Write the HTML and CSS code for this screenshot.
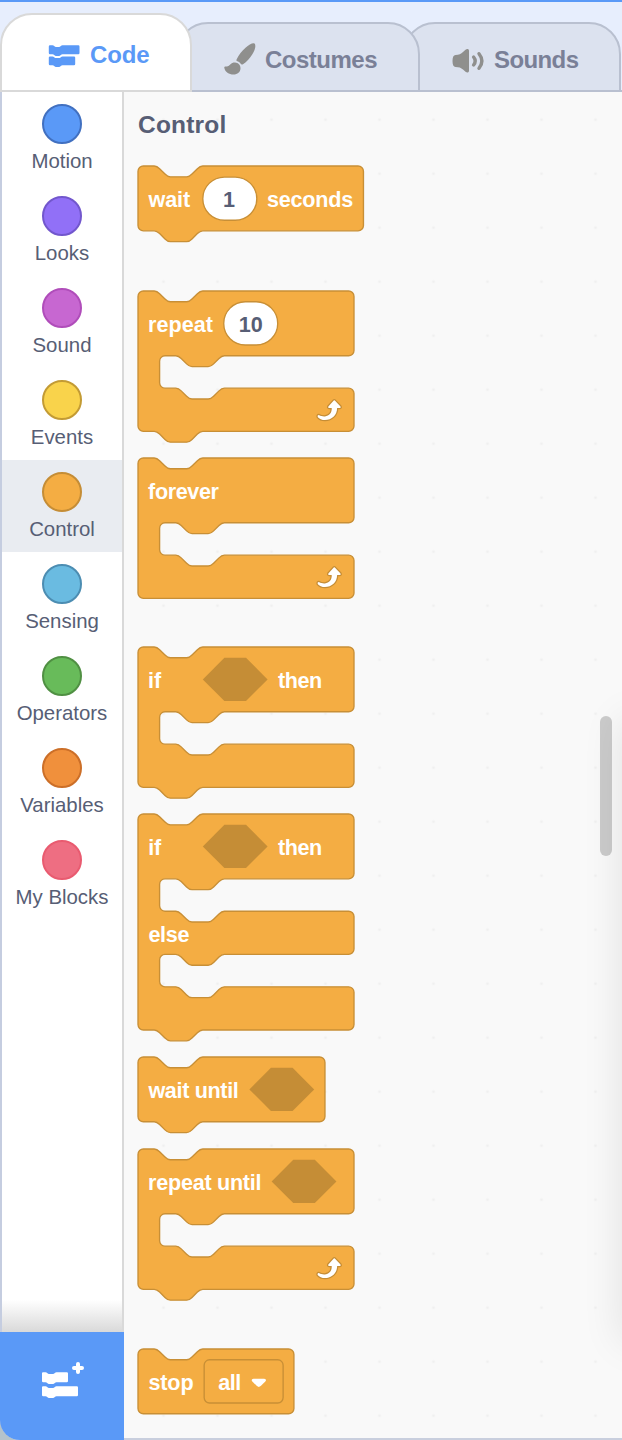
FILE: index.html
```
<!DOCTYPE html>
<html lang="en">
<head>
<meta charset="utf-8">
<title>Block editor</title>
<link rel="stylesheet" href="styles.css">
</head>
<body>
<svg class="defs" width="0" height="0" aria-hidden="true">
  <defs>
    <path id="c-block" d="M0 4A4 4 0 0 1 4 0H12c2 0 3 1 4 2l4 4c1 1 2 2 4 2h12c2 0 3-1 4-2l4-4c1-1 2-2 4-2H156a4 4 0 0 1 4 4V44a4 4 0 0 1-4 4H64c-2 0-3 1-4 2l-4 4c-1 1-2 2-4 2h-12c-2 0-3-1-4-2l-4-4c-1-1-2-2-4-2h-8a4 4 0 0 0-4 4v16a4 4 0 0 0 4 4h8c2 0 3 1 4 2l4 4c1 1 2 2 4 2h12c2 0 3-1 4-2l4-4c1-1 2-2 4-2H156a4 4 0 0 1 4 4v24a4 4 0 0 1-4 4H48c-2 0-3 1-4 2l-4 4c-1 1-2 2-4 2h-12c-2 0-3-1-4-2l-4-4c-1-1-2-2-4-2H4a4 4 0 0 1-4-4z"/>
    <path id="hexagon" d="M16 0H32L48 16L32 32H16L0 16z"/>
    <path id="loop-arrow" d="M17.800 5.100L22 9.500Q22.500 10.600 21.500 10.700H19.500C19.500 16 15.500 19.600 10.500 19.600C8.300 19.600 6.300 18.800 5.100 17.300Q4.700 16 6 15.900C7.500 16.800 9 17 10.500 16.900C13.700 16.500 15.700 14.300 15.500 10.700H13.600Q12.500 10.600 13 9.500L17 5.100Q17.400 4.800 17.800 5.100Z"/>
  </defs>
</svg>

<div class="editor">
  <header class="tabs">
    <div class="tab tab-code">
      <svg class="tab-icon" width="32" height="24" viewBox="0 0 32 24"><path d="M2 2.300H4.500Q5.500 2.300 6.200 3Q7 4 8 4H11Q12 4 12.800 3Q13.500 2.300 14.500 2.300H30.300Q31.500 2.300 31.500 3.500V10Q31.500 11.200 30.300 11.200H14.500Q13.500 11.200 12.800 12Q12 13 11 13H8Q7 13 6.200 12Q5.500 11.200 4.500 11.200H2Q.8 11.200 .8 10V3.500Q.8 2.300 2 2.300ZM2 13.400H4.500Q5.500 13.400 6.200 14.200Q7 15.100 8 15.100H11Q12 15.100 12.800 14.200Q13.500 13.400 14.500 13.400H26Q27.200 13.400 27.200 14.600V21Q27.200 22.200 26 22.200H14.500Q13.500 22.200 12.800 23Q12 24 11 24H8Q7 24 6.200 23Q5.500 22.200 4.500 22.200H2Q.8 22.200 .8 21V14.600Q.8 13.400 2 13.400Z"/></svg>
      <span>Code</span>
    </div>
    <div class="tab tab-costumes">
      <svg class="tab-icon" width="32" height="32" viewBox="0 0 32 32"><path d="M30.500.5C32.300 2 31 7 28.500 11C26 15 22.800 18.700 19 21.300C17.900 22 17 21.500 16.300 20.300C15.600 19.200 14.700 18.500 13.500 18.200C12.300 17.900 12.200 17.200 12.700 16.200C14.600 12.200 17.500 8.500 21.500 4.800C25 1.700 28.900-.6 30.500.5ZM11 19.600C14.300 19.700 16.500 22 16.500 25.200C16.500 29 13.500 31.500 9.500 31.500C5 31.500 1 29 .3 24.700C.1 23.500 1.200 23.500 2.500 23.600C4.500 23.700 5.300 22.500 6.500 21.300C7.700 20.100 9.300 19.500 11 19.600Z"/></svg>
      <span>Costumes</span>
    </div>
    <div class="tab tab-sounds">
      <svg class="tab-icon" width="34" height="26" viewBox="0 0 34 26"><path d="M3.500 7C7 7 9 6 11 4L13.500 1.800C15 .5 17 .8 17 2.800V22.800C17 24.800 15 25.100 13.500 23.800L11 21.500C9 19.600 7 18.900 3.500 18.900C1.500 18.900.5 17 .5 13C.5 9 1.500 7 3.500 7Z"/><path class="wave" d="M21.600 9Q24.800 13 21.600 17M27 5.700Q32.800 13 27 20.300"/></svg>
      <span>Sounds</span>
    </div>
  </header>

  <main class="workspace">
    <nav class="categories">
      <div class="category"><i class="dot motion"></i><span>Motion</span></div>
      <div class="category"><i class="dot looks"></i><span>Looks</span></div>
      <div class="category"><i class="dot sound"></i><span>Sound</span></div>
      <div class="category"><i class="dot events"></i><span>Events</span></div>
      <div class="category selected"><i class="dot control"></i><span>Control</span></div>
      <div class="category"><i class="dot sensing"></i><span>Sensing</span></div>
      <div class="category"><i class="dot operators"></i><span>Operators</span></div>
      <div class="category"><i class="dot variables"></i><span>Variables</span></div>
      <div class="category"><i class="dot myblocks"></i><span>My Blocks</span></div>
      <div class="fade"></div>
      <div class="extensions">
        <svg width="44" height="38" viewBox="0 0 44 38"><path d="M2 10.300H4.500Q5.500 10.300 6.200 11Q7 12 8 12H12Q13 12 13.800 11Q14.500 10.300 15.500 10.300H25.800Q27 10.300 27 11.500V19Q27 20.200 25.800 20.200H15.500Q14.500 20.200 13.800 21Q13 22 12 22H8Q7 22 6.200 21Q5.500 20.200 4.500 20.200H2.200Q1 20.200 1 19V11.500Q1 10.300 2 10.300ZM2 24.300H4.500Q5.500 24.300 6.200 25Q7 26 8 26H12Q13 26 13.800 25Q14.500 24.300 15.500 24.300H35.800Q37 24.300 37 25.500V33Q37 34.200 35.800 34.200H15.500Q14.500 34.200 13.800 35Q13 36 12 36H8Q7 36 6.200 35Q5.500 34.200 4.500 34.200H2.200Q1 34.200 1 33V25.500Q1 24.300 2 24.300Z"/><path class="plus" d="M37 2V10M33 6H41"/></svg>
      </div>
    </nav>

    <section class="palette">
      <h2>Control</h2>
      <svg class="block wait" width="226" height="65" viewBox="0 0 167.407 48.148">
        <path class="shape" d="M0 4A4 4 0 0 1 4 0H12c2 0 3 1 4 2l4 4c1 1 2 2 4 2h12c2 0 3-1 4-2l4-4c1-1 2-2 4-2H163a4 4 0 0 1 4 4V44a4 4 0 0 1-4 4H48c-2 0-3 1-4 2l-4 4c-1 1-2 2-4 2h-12c-2 0-3-1-4-2l-4-4c-1-1-2-2-4-2H4a4 4 0 0 1-4-4z"/>
        <text x="7.700" y="30" textLength="31">wait</text>
        <rect class="field" x="48" y="8.200" width="40" height="32" rx="16"/>
        <text class="value" x="67.500" y="30">1</text>
        <text x="95.500" y="30" textLength="64">seconds</text>
      </svg>
      <svg class="block repeat" width="216" height="140.400" viewBox="0 0 160 104">
        <use class="shape" href="#c-block"/>
        <text x="7.500" y="30.300" textLength="48">repeat</text>
        <rect class="field" x="63.500" y="8" width="40" height="32" rx="16"/>
        <text class="value" x="83.500" y="30.300">10</text>
        <use class="loop" href="#loop-arrow" x="128" y="76"/>
      </svg>
      <svg class="block forever" width="216" height="140.400" viewBox="0 0 160 104">
        <path class="shape" d="M0 4A4 4 0 0 1 4 0H12c2 0 3 1 4 2l4 4c1 1 2 2 4 2h12c2 0 3-1 4-2l4-4c1-1 2-2 4-2H156a4 4 0 0 1 4 4V44a4 4 0 0 1-4 4H64c-2 0-3 1-4 2l-4 4c-1 1-2 2-4 2h-12c-2 0-3-1-4-2l-4-4c-1-1-2-2-4-2h-8a4 4 0 0 0-4 4v16a4 4 0 0 0 4 4h8c2 0 3 1 4 2l4 4c1 1 2 2 4 2h12c2 0 3-1 4-2l4-4c1-1 2-2 4-2H156a4 4 0 0 1 4 4v24a4 4 0 0 1-4 4H4a4 4 0 0 1-4-4z"/>
        <text x="7.500" y="30.300" textLength="52.500">forever</text>
        <use class="loop" href="#loop-arrow" x="128" y="76"/>
      </svg>
      <svg class="block if-then" width="216" height="140.400" viewBox="0 0 160 104">
        <use class="shape" href="#c-block"/>
        <text x="7.500" y="30.300">if</text>
        <use class="slot" href="#hexagon" x="48" y="8"/>
        <text x="103.700" y="30.300" textLength="32.700">then</text>
      </svg>
      <svg class="block if-else" width="216" height="216" viewBox="0 0 160 160">
        <path class="shape" d="M0 4A4 4 0 0 1 4 0H12c2 0 3 1 4 2l4 4c1 1 2 2 4 2h12c2 0 3-1 4-2l4-4c1-1 2-2 4-2H156a4 4 0 0 1 4 4V44a4 4 0 0 1-4 4H64c-2 0-3 1-4 2l-4 4c-1 1-2 2-4 2h-12c-2 0-3-1-4-2l-4-4c-1-1-2-2-4-2h-8a4 4 0 0 0-4 4v16a4 4 0 0 0 4 4h8c2 0 3 1 4 2l4 4c1 1 2 2 4 2h12c2 0 3-1 4-2l4-4c1-1 2-2 4-2H156a4 4 0 0 1 4 4v24a4 4 0 0 1-4 4H64c-2 0-3 1-4 2l-4 4c-1 1-2 2-4 2h-12c-2 0-3-1-4-2l-4-4c-1-1-2-2-4-2h-8a4 4 0 0 0-4 4v16a4 4 0 0 0 4 4h8c2 0 3 1 4 2l4 4c1 1 2 2 4 2h12c2 0 3-1 4-2l4-4c1-1 2-2 4-2H156a4 4 0 0 1 4 4v24a4 4 0 0 1-4 4H48c-2 0-3 1-4 2l-4 4c-1 1-2 2-4 2h-12c-2 0-3-1-4-2l-4-4c-1-1-2-2-4-2H4a4 4 0 0 1-4-4z"/>
        <text x="7.500" y="30">if</text>
        <use class="slot" href="#hexagon" x="48" y="8"/>
        <text x="103.700" y="30" textLength="32.700">then</text>
        <text x="7.700" y="94.500" textLength="30.500">else</text>
      </svg>
      <svg class="block wait-until" width="187.650" height="64.800" viewBox="0 0 139 48">
        <path class="shape" d="M0 4A4 4 0 0 1 4 0H12c2 0 3 1 4 2l4 4c1 1 2 2 4 2h12c2 0 3-1 4-2l4-4c1-1 2-2 4-2H134.500a4 4 0 0 1 4 4V44a4 4 0 0 1-4 4H48c-2 0-3 1-4 2l-4 4c-1 1-2 2-4 2h-12c-2 0-3-1-4-2l-4-4c-1-1-2-2-4-2H4a4 4 0 0 1-4-4z"/>
        <text x="7.700" y="30.300" textLength="67">wait until</text>
        <use class="slot" href="#hexagon" x="82.500" y="8"/>
      </svg>
      <svg class="block repeat-until" width="216" height="140.400" viewBox="0 0 160 104">
        <use class="shape" href="#c-block"/>
        <text x="7.500" y="30.300" textLength="84">repeat until</text>
        <use class="slot" href="#hexagon" x="99" y="8"/>
        <use class="loop" href="#loop-arrow" x="128" y="76"/>
      </svg>
      <svg class="block stop" width="156.600" height="64.800" viewBox="0 0 116 48">
        <path class="shape" d="M0 4A4 4 0 0 1 4 0H12c2 0 3 1 4 2l4 4c1 1 2 2 4 2h12c2 0 3-1 4-2l4-4c1-1 2-2 4-2H111.500a4 4 0 0 1 4 4V44a4 4 0 0 1-4 4H4a4 4 0 0 1-4-4z"/>
        <text x="7.700" y="30.300" textLength="33.500">stop</text>
        <rect class="dropdown" x="49" y="8" width="58.500" height="32" rx="4"/>
        <text x="59.500" y="30.300" textLength="17">all</text>
        <path class="caret" d="M85.500 22H93.500Q95.600 22.300 94.300 24L90.900 27.500Q89.500 28.700 88.100 27.500L84.700 24Q83.400 22.300 85.500 22Z"/>
      </svg>
      <div class="scrollbar"></div>
      <div class="edge-shadow"></div>
    </section>
  </main>
</div>
</body>
</html>
```
FILE: styles.css
```
* { box-sizing: border-box; }
body { margin: 0; font-family: "Liberation Sans", Arial, sans-serif; color: #575e75; }
.defs { position: absolute; }

.editor { width: 622px; height: 1440px; overflow: hidden; display: flex; flex-direction: column; background: #e7eefd; border-top: 2px solid #5a99f7; }

.tabs { height: 90px; flex: none; display: flex; align-items: flex-end; border-bottom: 2px solid #b9c0d0; }
.tab { display: flex; align-items: center; height: 70px; margin-bottom: -2px; border: 2px solid #b9c0d0; border-radius: 32px 32px 0 0; background: #dce2ef; color: #7a8097; font-size: 24px; font-weight: bold; }
.tab span { white-space: nowrap; }
.tab-icon { flex: none; fill: #8f8f8d; overflow: visible; }
.tab-code { position: relative; z-index: 3; width: 192px; height: 79px; padding: 5px 0 0 46px; gap: 10px; background: #fff; border-color: #d9d9d9; color: #5a99f7; letter-spacing: -.1px; }
.tab-code .tab-icon { fill: #5a99f7; }
.tab-costumes { position: relative; z-index: 2; width: 244px; margin-left: -16px; padding: 6px 0 0 46px; gap: 9px; letter-spacing: -.5px; }
.tab-costumes .tab-icon { margin-top: -2px; }
.tab-sounds { width: 218px; margin-left: -17px; padding: 6px 0 0 47px; gap: 8px; letter-spacing: -.6px; }
.tab-sounds .tab-icon { margin-top: 2px; }
.wave { fill: none; stroke: #8f8f8d; stroke-width: 3.400; stroke-linecap: round; }

.workspace { flex: 1; min-height: 0; display: flex; background: #b4c3cb; }
.categories { width: 124px; flex: none; display: flex; flex-direction: column; background: #fff; border-left: 2px solid #c5cde0; border-right: 2px solid #d9d9d9; border-bottom-left-radius: 20px; }
.category { height: 92px; flex: none; display: flex; flex-direction: column; align-items: center; padding-top: 12px; gap: 6px; font-size: 20.400px; line-height: 23px; white-space: nowrap; }
.category.selected { background: #e9ecf1; }
.dot { width: 40px; height: 40px; flex: none; border: 2px solid; border-radius: 50%; }
.motion { background: #5a99f7; border-color: #4170c0; }
.looks { background: #9170f7; border-color: #7257cd; }
.sound { background: #c767d1; border-color: #b04dba; }
.events { background: #f9d34b; border-color: #c39b34; }
.control { background: #f4ad43; border-color: #c58d36; }
.sensing { background: #6abbe1; border-color: #4c8db2; }
.operators { background: #68bb5a; border-color: #509043; }
.variables { background: #f0903c; border-color: #cc6f28; }
.myblocks { background: #ee6e82; border-color: #e95b70; }
.fade { height: 32px; margin-top: auto; flex: none; background: linear-gradient(#fff, #d9d9d9); }
.extensions { height: 108px; flex: none; margin: 0 -2px; padding: 30px 0 0 41px; background: #5a99f7; border-radius: 0 0 0 20px; }
.extensions svg { display: block; fill: #fff; }
.plus { stroke: #fff; stroke-width: 4; stroke-linecap: round; }

.palette { position: relative; flex: 1; min-width: 0; padding: 18px 0 0 14px; background: #f9f9f9 radial-gradient(circle at 27px 27px, #f0f0f0 1.200px, transparent 1.700px) 12.500px -53.300px / 54px 54px; border-bottom: 2px solid #c9cfde; }
.palette h2 { margin: 0; height: 29px; font-size: 24.500px; line-height: 29px; letter-spacing: .2px; }
.block { display: block; overflow: visible; }
.shape { fill: #f4ad43; stroke: #c88f36; stroke-width: 1; }
.block text { fill: #fff; font-size: 16px; font-weight: bold; }
.block text.value { fill: #575e75; text-anchor: middle; }
.field { fill: #fff; stroke: #c88f36; }
.slot { fill: #c58d36; }
.dropdown { fill: #f4ad43; stroke: #c88f36; }
.caret { fill: #fff; }
.loop { fill: #fff; stroke: #c58d36; stroke-width: 1.800; stroke-linejoin: round; paint-order: stroke; }
.wait { margin-top: 27.400px; }
.repeat { margin-top: 59.200px; }
.forever { margin-top: 27px; }
.if-then { margin-top: 48.600px; }
.if-else { margin-top: 27px; }
.wait-until { margin-top: 27px; }
.repeat-until { margin-top: 27px; }
.stop { margin-top: 59.400px; }
.scrollbar { position: absolute; left: 476px; top: 624px; width: 12px; height: 140px; border-radius: 6px; background: #cbcbcb; }
.edge-shadow { position: absolute; left: 498px; top: 628px; width: 40px; height: 622px; box-shadow: 0 0 40px rgba(0, 0, 0, .1); }
```
